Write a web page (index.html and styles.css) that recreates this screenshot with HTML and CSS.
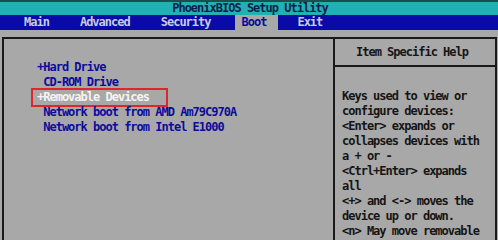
FILE: index.html
```html
<!DOCTYPE html>
<html lang="en">
<head>
    <meta charset="UTF-8">
    <title>PhoenixBIOS Setup Utility</title>
    <link rel="stylesheet" href="styles.css">
</head>
<body>
    <div class="title">PhoenixBIOS Setup Utility</div>
    <nav class="menu">
        <span>Main</span>
        <span>Advanced</span>
        <span>Security</span>
        <span class="active">Boot</span>
        <span>Exit</span>
    </nav>
    <div class="screen">
        <div class="frame">
            <div class="list">
                <div class="row">+Hard Drive</div>
                <div class="row"> CD-ROM Drive</div>
                <div class="row"><span class="marked">+Removable Devices</span></div>
                <div class="row"> Network boot from AMD Am79C970A</div>
                <div class="row"> Network boot from Intel E1000</div>
            </div>
            <div class="help">
                <div class="help-head">Item Specific Help</div>
                <div class="help-text">Keys used to view or
configure devices:
&lt;Enter&gt; expands or
collapses devices with
a + or -
&lt;Ctrl+Enter&gt; expands
all
&lt;+&gt; and &lt;-&gt; moves the
device up or down.
&lt;n&gt; May move removable</div>
            </div>
        </div>
    </div>
</body>
</html>
```

FILE: styles.css
```css
html, body {
    margin: 0;
    padding: 0;
    height: 100%;
    overflow: hidden;
}

body {
    display: flex;
    flex-direction: column;
    background-color: #a8a8a8;
    font-family: "DejaVu Sans Mono", "Liberation Mono", monospace;
    font-size: 12px;
    font-weight: bold;
    letter-spacing: -1px;
    line-height: 15px;
}

.title {
    height: 13px;
    line-height: 13px;
    border-top: 2px solid #1d4d50;
    background-color: #22b0b2;
    color: #0c1f48;
    text-align: center;
    padding-left: 2px;
}

.menu {
    display: flex;
    gap: 17px;
    height: 15px;
    padding-left: 17px;
    background-color: #0a0aa8;
    color: #c6cce6;
}

.menu span {
    padding: 0 7px;
}

.menu .active {
    background-color: #a8a8a8;
    color: #0c0c9c;
    padding-right: 12px;
    margin-right: -5px;
}

.screen {
    flex: 1;
    display: flex;
    padding: 7px 1px 0 2px;
    min-height: 0;
}

.frame {
    flex: 1;
    display: grid;
    grid-template-columns: 1fr 160px;
    border: 2px solid #1a1a1a;
    border-bottom: none;
    overflow: hidden;
}

.list {
    padding: 21px 0 0 33px;
    color: #0c0c9c;
    border-right: 2px solid #1a1a1a;
}

.row {
    white-space: pre;
}

.marked {
    display: inline-block;
    margin: -2px 0 -2px -6px;
    padding: 0 17px 0 4px;
    border: 2px solid #e0262c;
    color: #f4f4f4;
}

.help {
    color: #151515;
}

.help-head {
    height: 26px;
    line-height: 26px;
    text-align: center;
    border-bottom: 2px solid #1a1a1a;
    padding-right: 6px;
}

.help-text {
    white-space: pre;
    padding: 22px 0 0 7px;
}
```
